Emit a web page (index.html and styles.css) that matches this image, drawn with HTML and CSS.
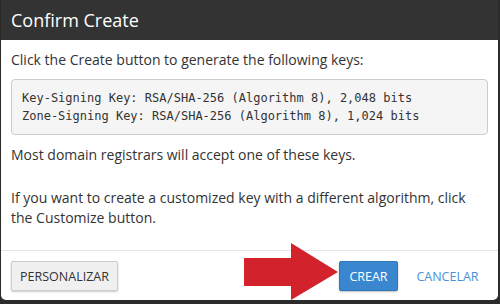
FILE: index.html
```html
<!DOCTYPE html>
<html lang="en">
<head>
    <meta charset="UTF-8">
    <title>Confirm Create</title>
    <link rel="stylesheet" href="styles.css">
</head>
<body>
    <div class="modal">
        <div class="modal-header">Confirm Create</div>
        <div class="modal-body">
            <p>Click the Create button to generate the following keys:</p>
            <pre>Key-Signing Key: RSA/SHA-256 (Algorithm 8), 2,048 bits
Zone-Signing Key: RSA/SHA-256 (Algorithm 8), 1,024 bits</pre>
            <p class="gap">Most domain registrars will accept one of these keys.</p>
            <p>If you want to create a customized key with a different algorithm, click the Customize button.</p>
        </div>
        <div class="modal-footer">
            <button class="btn btn-default">Personalizar</button>
            <span class="spacer"></span>
            <button class="btn btn-primary">Crear</button>
            <button class="btn btn-link">Cancelar</button>
        </div>
        <!-- red pointer arrow over the footer -->
        <svg class="arrow" width="100" height="60" viewBox="0 0 100 60">
            <polygon points="0,15 47,15 47,0 94,29 47,57 47,43 0,43" fill="#d2222b"/>
        </svg>
    </div>
</body>
</html>
```

FILE: styles.css
```css
body {
    margin: 0;
    background-color: #2b2b2b;
    font-family: "Open Sans", sans-serif;
    font-size: 14px;
    line-height: 20px;
    color: #333;
}
.modal {
    position: relative;
    width: 497px;
    height: 300px;
    margin-left: 1px;
    background-color: white;
    border-radius: 0 0 5px 5px;
    display: flex;
    flex-direction: column;
    overflow: hidden;
}
.modal-header {
    height: 40px;
    line-height: 40px;
    padding: 0 10px;
    background-color: #333;
    color: white;
    font-size: 18px;
}
.modal-body {
    flex: 1;
    padding: 10px 10px 0;
}
.modal-body p {
    margin: 0 0 9px;
}
.modal-body p.gap {
    margin-bottom: 23px;
}
pre {
    margin: 0 0 10px;
    padding: 9px 10px;
    background-color: #f5f5f5;
    border: 1px solid #ccc;
    border-radius: 4px;
    font-family: "DejaVu Sans Mono", monospace;
    font-size: 12px;
    line-height: 18px;
    color: #333;
}
.modal-footer {
    border-top: 1px solid #e5e5e5;
    padding: 10px 10px 9px;
    display: flex;
    align-items: center;
}
.spacer {
    flex: 1;
}
.btn {
    height: 30px;
    padding: 0;
    font-family: "Open Sans", sans-serif;
    font-size: 12.5px;
    text-transform: uppercase;
    border-radius: 2px;
    border: 1px solid transparent;
    cursor: pointer;
}
.btn-default {
    background-color: #f0f0f0;
    border-color: #ccc;
    color: #333;
    box-shadow: 0 1px 2px rgba(0, 0, 0, 0.2);
    width: 107px;
}
.btn-primary {
    background-color: #3a87cf;
    border-color: #2f76b8;
    color: white;
    box-shadow: 0 1px 2px rgba(0, 0, 0, 0.25);
    width: 59px;
}
.btn-link {
    background: none;
    color: #4a90d9;
    width: 77px;
    margin-left: 11px;
    margin-right: 2px;
}
.arrow {
    position: absolute;
    left: 243px;
    top: 243px;
}
```
